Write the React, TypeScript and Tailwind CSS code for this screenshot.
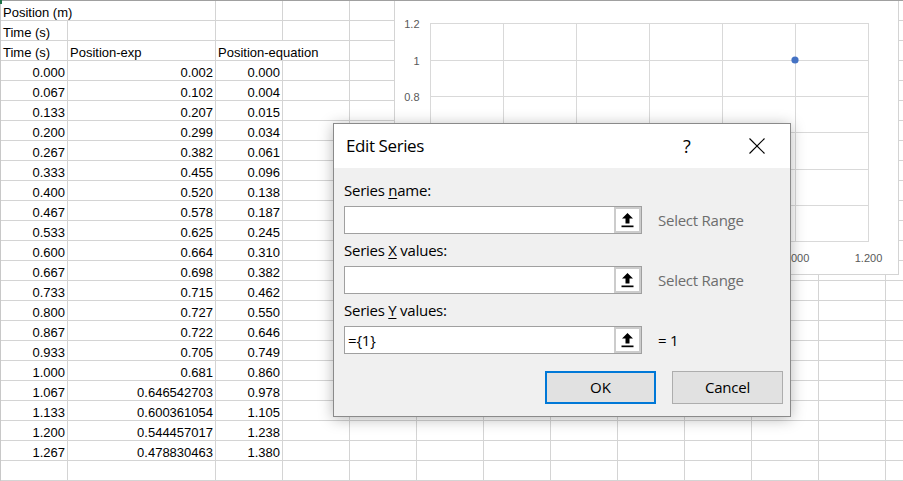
import React from "react";

const A = ["0.000","0.067","0.133","0.200","0.267","0.333","0.400","0.467","0.533","0.600","0.667","0.733","0.800","0.867","0.933","1.000","1.067","1.133","1.200","1.267"];
const B = ["0.002","0.102","0.207","0.299","0.382","0.455","0.520","0.578","0.625","0.664","0.698","0.715","0.727","0.722","0.705","0.681","0.646542703","0.600361054","0.544457017","0.478830463"];
const C = ["0.000","0.004","0.015","0.034","0.061","0.096","0.138","0.187","0.245","0.310","0.382","0.462","0.550","0.646","0.749","0.860","0.978","1.105","1.238","1.380"];

const COLS = ["w-[67px]","w-[148px]","w-[67px]","w-[67px]","w-[67px]","w-[67px]","w-[67px]","w-[67px]","w-[67px]","w-[67px]","w-[67px]","w-[67px]","w-[67px]","w-[67px]"];

type Cell = { t?: string; right?: boolean; open?: boolean };

function Row({ cells }: { cells: Cell[] }) {
  return (
    <div className="flex h-[20px] shrink-0">
      {COLS.map((w, i) => {
        const c = cells[i] || {};
        return (
          <div
            key={i}
            className={[
              w,
              "h-full shrink-0 min-w-0 border-b border-[#d4d4d4] flex items-end leading-[15px] whitespace-nowrap overflow-visible",
              c.open ? "" : "border-r",
              c.right ? "justify-end pr-[2px]" : "pl-[2px]",
            ].join(" ")}
          >
            {c.t}
          </div>
        );
      })}
    </div>
  );
}

function UpArrowButton() {
  return (
    <div className="w-[27px] h-full shrink-0 border-2 border-[#cccccc] bg-white flex items-center justify-center">
      <svg width="13" height="15" viewBox="0 0 13 15">
        <polygon points="6.5,0 12,5.5 8.5,5.5 8.5,10.5 4.5,10.5 4.5,5.5 1,5.5" fill="#000" />
        <rect x="0.5" y="12.5" width="12" height="1.7" fill="#000" />
      </svg>
    </div>
  );
}

function RangeInput({ value }: { value?: string }) {
  return (
    <div className="flex w-[298px] h-[28px] border border-[#a0a0a0] bg-white">
      <div className="flex-1 flex items-center pl-[3px] text-[15px] tracking-[-0.2px] text-black">{value}</div>
      <UpArrowButton />
    </div>
  );
}

function Field({ label, value, hint, gray }: { label: React.ReactNode; value?: string; hint: string; gray?: boolean }) {
  return (
    <div className="flex flex-col">
      <div className="h-[20px] leading-[20px] text-[15px] tracking-[-0.25px] text-black">{label}</div>
      <div className="mt-[6px] flex items-center">
        <RangeInput value={value} />
        <div className={["ml-[16px] text-[15px] tracking-[-0.25px]", gray ? "text-[#6d6d6d]" : "text-black"].join(" ")}>{hint}</div>
      </div>
    </div>
  );
}

function Chart() {
  const hy = [23.5, 60.5, 96.5, 132.5, 169.5, 205.5, 241.5];
  const vx = [430.5, 503.5, 576.5, 649.5, 722.5, 795.5, 868.5];
  const yl = ["1.2", "1", "0.8"];
  const xl: [string, number][] = [["1.000", 795.5], ["1.200", 868.5]];
  return (
    <div className="absolute left-[394px] top-[1px] w-[505px] h-[274px] bg-white border-x border-b border-[#d4d4d4]">
      <svg width="503" height="273" viewBox="395 1 503 273" className="block font-['Liberation_Sans']">
        {hy.map((y) => (
          <line key={"h" + y} x1={430} x2={869} y1={y} y2={y} stroke="#d9d9d9" strokeWidth={1} />
        ))}
        {vx.map((x) => (
          <line key={"v" + x} x1={x} x2={x} y1={23} y2={242} stroke="#d9d9d9" strokeWidth={1} />
        ))}
        {yl.map((t, i) => (
          <text key={t} x={419.5} y={hy[i]} textAnchor="end" dominantBaseline="central" fontSize={11} fill="#595959">
            {t}
          </text>
        ))}
        {xl.map(([t, x]) => (
          <text key={t} x={x} y={258} textAnchor="middle" dominantBaseline="central" fontSize={11} fill="#595959">
            {t}
          </text>
        ))}
        <circle cx={795} cy={60} r={3.6} fill="#4472c4" />
      </svg>
    </div>
  );
}

function Dialog() {
  return (
    <div className="absolute left-[333px] top-[123px] w-[458px] h-[294px] border border-[#8a8a8a] bg-[#f0f0f0] shadow-[0_2px_14px_rgba(0,0,0,0.28)] font-['Open_Sans'] flex flex-col">
      <div className="h-[44px] shrink-0 bg-white flex items-center pl-[12px]">
        <div className="text-[17px] leading-[24px] tracking-[-0.4px] text-black">Edit Series</div>
        <div className="ml-auto flex items-center pr-[10px]">
          <div className="w-[46px] flex justify-center text-[18px] leading-[24px] text-black">?</div>
          <div className="w-[46px] ml-[24px] flex justify-center">
            <svg width="16" height="16" viewBox="0 0 16 16">
              <line x1="0.5" y1="0.5" x2="15.5" y2="15.5" stroke="#000" strokeWidth="1.1" />
              <line x1="15.5" y1="0.5" x2="0.5" y2="15.5" stroke="#000" strokeWidth="1.1" />
            </svg>
          </div>
        </div>
      </div>
      <div className="flex-1 flex flex-col pl-[10px] pr-[7px] pt-[12px]">
        <div className="flex flex-col gap-[6px]">
          <Field label={<span>Series <span className="underline underline-offset-2">n</span>ame:</span>} hint="Select Range" gray />
          <Field label={<span>Series <span className="underline underline-offset-2">X</span> values:</span>} hint="Select Range" gray />
          <Field label={<span>Series <span className="underline underline-offset-2">Y</span> values:</span>} value="={1}" hint="= 1" />
        </div>
        <div className="mt-[17px] flex justify-end gap-[16px]">
          <div className="w-[111px] h-[33px] border-2 border-[#0078d7] bg-[#e1e1e1] flex items-center justify-center text-[15px] text-black">OK</div>
          <div className="w-[111px] h-[33px] border border-[#adadad] bg-[#e1e1e1] flex items-center justify-center text-[15px] tracking-[-0.2px] text-black">Cancel</div>
        </div>
      </div>
    </div>
  );
}

export default function App() {
  const rows: Cell[][] = [];
  rows.push([{ t: "Position (m)", open: true }]);
  rows.push([{ t: "Time (s)" }]);
  rows.push([{ t: "Time (s)" }, { t: "Position-exp" }, { t: "Position-equation", open: true }]);
  for (let i = 0; i < A.length; i++) {
    rows.push([
      { t: A[i], right: true },
      { t: B[i], right: true },
      { t: C[i], right: true },
    ]);
  }
  rows.push([]);
  return (
    <div className="relative w-[903px] h-[481px] overflow-hidden bg-white font-['Liberation_Sans'] text-[13px] text-black">
      <div className="h-px w-full bg-[#a0a0a0]" />
      <div className="flex">
        <div className="w-px shrink-0 bg-[#c8c8c8]" />
        <div className="flex flex-col">
          {rows.map((r, i) => (
            <Row key={i} cells={r} />
          ))}
        </div>
      </div>
      <div className="absolute left-0 top-0 w-[2px] h-[4px] bg-[#217346]" />
      <Chart />
      <Dialog />
    </div>
  );
}
